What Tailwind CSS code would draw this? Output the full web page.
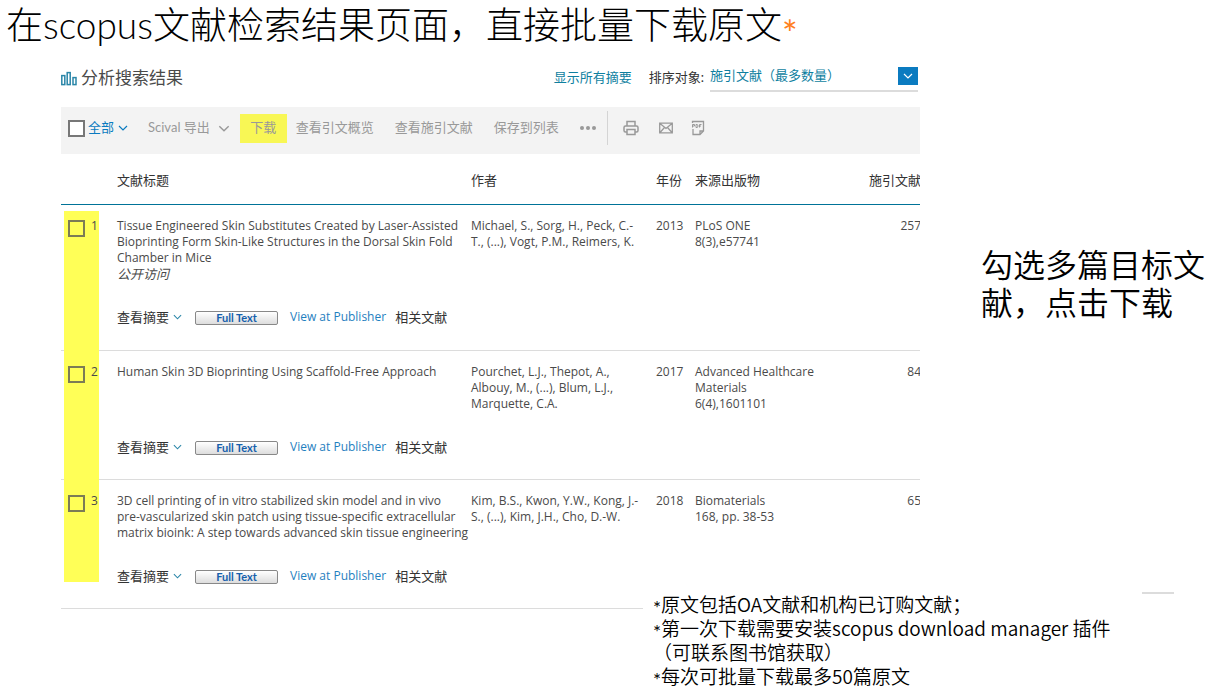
<!DOCTYPE html>
<html lang="zh-CN">
<head>
    <meta charset="UTF-8">
    <meta name="viewport" content="width=device-width, initial-scale=1.0">
    <title>Scopus 批量下载原文</title>
    <script src="https://cdn.jsdelivr.net/npm/@tailwindcss/browser@4"></script>
</head>
<body class="bg-white text-black overflow-x-hidden font-['Lato','Noto_Sans_CJK_SC',sans-serif]">
    <!-- Icon shapes shared by the rows -->
    <svg class="hidden" aria-hidden="true">
        <symbol id="chevron" viewBox="0 0 10 6"><path d="M1 1l4 4 4-4" fill="none" stroke="currentColor" stroke-width="1.2"/></symbol>
    </svg>

    <!-- Slide title -->
    <header class="pl-[6px] h-12">
        <h1 class="text-[37px] leading-[50px] font-light whitespace-nowrap">在scopus文献检索结果页面，直接批量下载原文<span class="align-sub leading-none font-normal text-[#ff7f1e]">*</span></h1>
    </header>

    <div class="flex items-start">
        <!-- Search results -->
        <main class="ml-[61px] w-[71%] shrink-0 overflow-hidden text-[13px] text-[#4a4a4a]">
            <!-- Sort bar -->
            <div class="flex items-center h-[59px] pr-[2px]">
                <a href="#" class="flex items-center gap-1 text-[17px] leading-6">
                    <svg class="w-4 h-4 text-[#2a86a8]" viewBox="0 0 16 16" fill="none" stroke="currentColor" stroke-width="1.5">
                        <rect x="0.8" y="5.6" width="3" height="9"/>
                        <rect x="6.2" y="2.6" width="3" height="12"/>
                        <rect x="12" y="7.6" width="3" height="7"/>
                    </svg>
                    分析搜索结果
                </a>
                <a href="#" class="ml-auto text-[#0f7f9f]">显示所有摘要</a>
                <label for="sort" class="ml-[17px] mr-[6px] text-[#333]">排序对象:</label>
                <div class="relative w-[208px] h-7 border-b-2 border-[#dcdcdc]">
                    <select id="sort" class="appearance-none w-full h-[22px] leading-[22px] text-[#0f7f9f] bg-transparent outline-none">
                        <option>施引文献（最多数量）</option>
                    </select>
                    <span class="absolute right-0 top-[3px] w-5 h-[18px] bg-[#0b7bc0] text-white flex items-center justify-center pointer-events-none">
                        <svg class="w-[10px] h-[6px]"><use href="#chevron"/></svg>
                    </span>
                </div>
            </div>

            <!-- Toolbar -->
            <div class="flex items-center h-[47px] pb-[5px] pl-[7px] bg-[#f3f3f3] text-[#999] whitespace-nowrap">
                <input type="checkbox" id="all" class="appearance-none w-[17px] h-[17px] border-2 border-[#777] bg-white">
                <label for="all" class="ml-[3px] text-[#0b7bc0]">全部</label>
                <svg class="ml-1 w-[10px] h-[6px] text-[#0b7bc0]"><use href="#chevron"/></svg>
                <button class="ml-5 flex items-center gap-2">Scival 导出 <svg class="w-3 h-[7px]"><use href="#chevron"/></svg></button>
                <button class="ml-[10px] w-[47px] h-[29px] bg-[#f8f755]">下载</button>
                <button class="ml-[9px]">查看引文概览</button>
                <button class="ml-[21px]">查看施引文献</button>
                <button class="ml-[21px]">保存到列表</button>
                <button class="ml-[21px]" aria-label="更多">
                    <svg class="w-4 h-1" viewBox="0 0 16 4" fill="currentColor"><circle cx="2" cy="2" r="2"/><circle cx="8" cy="2" r="2"/><circle cx="14" cy="2" r="2"/></svg>
                </button>
                <span class="ml-[11px] h-[34px] border-l border-[#d4d4d4]"></span>
                <button class="ml-[15px]" aria-label="打印">
                    <svg class="w-4 h-4" viewBox="0 0 16 16" fill="none" stroke="currentColor" stroke-width="1.5"><path d="M4 6V1.500h8V6M4 12H2.500Q1 12 1 10.500v-3Q1 6 2.500 6h11Q15 6 15 7.500v3Q15 12 13.500 12H12M4 9.500h8v5H4z"/></svg>
                </button>
                <button class="ml-5" aria-label="电子邮件">
                    <svg class="w-[14px] h-4" viewBox="0 0 14 16" fill="none" stroke="currentColor" stroke-width="1.3"><path d="M.7 3.200h12.600v9.600H.7zM1 3.500l6 5 6-5M1 12.500l4.500-5M13 12.500l-4.500-5"/></svg>
                </button>
                <button class="ml-[18px]" aria-label="PDF">
                    <svg class="w-[14px] h-4" viewBox="0 0 14 16" fill="none" stroke="currentColor" stroke-width="1.3"><path d="M1.500 3V1.500h11V11L9 14.500H2V9M9 14.500V11h3.500"/><path stroke-width="1" d="M1.500 7.500v-3h2v1.500h-2M5 7.500v-3h1q1 0 1 1.500t-1 1.500zM8.500 7.500v-3h2M8.500 6h1.500"/></svg>
                </button>
            </div>

            <!-- Result table -->
            <div class="relative">
                <table class="w-[860px] table-fixed border-collapse text-left leading-4">
                    <thead class="[&_th]:shadow-[inset_0_-1px_0_#007398] [&_th]:font-normal">
                        <tr class="h-[51px] text-[#333]">
                            <th class="w-14"></th>
                            <th class="w-[354px]">文献标题</th>
                            <th class="w-[185px]">作者</th>
                            <th class="w-[39px]">年份</th>
                            <th class="w-[172px]">来源出版物</th>
                            <th class="text-right whitespace-nowrap">施引文献</th>
                        </tr>
                    </thead>
                    <tbody class="[&>tr]:border-b [&>tr]:border-[#dcdcdc] [&_td]:align-top [&_td]:pt-[13px] text-[12px] font-['Open_Sans','Noto_Sans_CJK_SC',sans-serif]">
                        <tr class="h-[145px]">
                            <td>
                                <div class="relative z-10 flex items-start gap-[6px] pl-[7px]">
                                    <input type="checkbox" id="r1" class="appearance-none mt-[2px] w-[17px] h-[17px] border-2 border-[#7c7c55]">
                                    <label for="r1">1</label>
                                </div>
                            </td>
                            <td>
                                <div class="min-h-[91px] whitespace-nowrap">Tissue Engineered Skin Substitutes Created by Laser-Assisted<br>Bioprinting Form Skin-Like Structures in the Dorsal Skin Fold<br>Chamber in Mice<br><em class="text-[13px]">公开访问</em></div>
                                <div class="flex items-center whitespace-nowrap">
                                    <a href="#" class="flex items-center gap-1 text-[13px] text-[#333]">查看摘要 <svg class="w-[9px] h-[6px] text-[#2a86a8]"><use href="#chevron"/></svg></a>
                                    <button class="ml-[13px] mt-[2px] w-[83px] h-[14px] rounded-xs border border-[#888] bg-linear-to-b from-white to-[#ddd] font-['Lato'] text-[11px] leading-3 font-bold text-[#1560ac]">Full Text</button>
                                    <a href="#" class="ml-3 text-[#1f80c0]">View at Publisher</a>
                                    <a href="#" class="ml-[9px] text-[13px] text-[#333]">相关文献</a>
                                </div>
                            </td>
                            <td>Michael, S., Sorg, H., Peck, C.-<br>T., (...), Vogt, P.M., Reimers, K.</td>
                            <td>2013</td>
                            <td>PLoS ONE<br>8(3),e57741</td>
                            <td class="text-right">257</td>
                        </tr>
                        <tr class="h-[129px]">
                            <td>
                                <div class="relative z-10 flex items-start gap-[6px] pl-[7px]">
                                    <input type="checkbox" id="r2" class="appearance-none mt-[2px] w-[17px] h-[17px] border-2 border-[#7c7c55]">
                                    <label for="r2">2</label>
                                </div>
                            </td>
                            <td>
                                <div class="min-h-[75px] whitespace-nowrap">Human Skin 3D Bioprinting Using Scaffold-Free Approach</div>
                                <div class="flex items-center whitespace-nowrap">
                                    <a href="#" class="flex items-center gap-1 text-[13px] text-[#333]">查看摘要 <svg class="w-[9px] h-[6px] text-[#2a86a8]"><use href="#chevron"/></svg></a>
                                    <button class="ml-[13px] mt-[2px] w-[83px] h-[14px] rounded-xs border border-[#888] bg-linear-to-b from-white to-[#ddd] font-['Lato'] text-[11px] leading-3 font-bold text-[#1560ac]">Full Text</button>
                                    <a href="#" class="ml-3 text-[#1f80c0]">View at Publisher</a>
                                    <a href="#" class="ml-[9px] text-[13px] text-[#333]">相关文献</a>
                                </div>
                            </td>
                            <td>Pourchet, L.J., Thepot, A.,<br>Albouy, M., (...), Blum, L.J.,<br>Marquette, C.A.</td>
                            <td>2017</td>
                            <td>Advanced Healthcare<br>Materials<br>6(4),1601101</td>
                            <td class="text-right">84</td>
                        </tr>
                        <tr class="h-[129px]">
                            <td>
                                <div class="relative z-10 flex items-start gap-[6px] pl-[7px]">
                                    <input type="checkbox" id="r3" class="appearance-none mt-[2px] w-[17px] h-[17px] border-2 border-[#7c7c55]">
                                    <label for="r3">3</label>
                                </div>
                            </td>
                            <td>
                                <div class="min-h-[75px] whitespace-nowrap">3D cell printing of in vitro stabilized skin model and in vivo<br>pre-vascularized skin patch using tissue-specific extracellular<br>matrix bioink: A step towards advanced skin tissue engineering</div>
                                <div class="flex items-center whitespace-nowrap">
                                    <a href="#" class="flex items-center gap-1 text-[13px] text-[#333]">查看摘要 <svg class="w-[9px] h-[6px] text-[#2a86a8]"><use href="#chevron"/></svg></a>
                                    <button class="ml-[13px] mt-[2px] w-[83px] h-[14px] rounded-xs border border-[#888] bg-linear-to-b from-white to-[#ddd] font-['Lato'] text-[11px] leading-3 font-bold text-[#1560ac]">Full Text</button>
                                    <a href="#" class="ml-3 text-[#1f80c0]">View at Publisher</a>
                                    <a href="#" class="ml-[9px] text-[13px] text-[#333]">相关文献</a>
                                </div>
                            </td>
                            <td>Kim, B.S., Kwon, Y.W., Kong, J.-<br>S., (...), Kim, J.H., Cho, D.-W.</td>
                            <td>2018</td>
                            <td>Biomaterials<br>168, pp. 38-53</td>
                            <td class="text-right">65</td>
                        </tr>
                    </tbody>
                </table>
                <!-- Highlighter over the checkbox column -->
                <div class="absolute left-[3px] top-[57px] bottom-[27px] w-[35px] bg-[#ffff57]"></div>
            </div>
        </main>

        <!-- Side note -->
        <aside class="ml-[61px] mt-[196px] w-[226px] shrink-0 text-[32px] leading-[38px] font-[350] font-['Noto_Sans_CJK_SC',sans-serif]">勾选多篇目标文献，点击下载</aside>
    </div>

    <!-- Footnotes -->
    <footer class="relative -mt-[17px] ml-[643px] pl-[10px] pr-9 flex justify-between items-start bg-white text-[19px] leading-[23px] font-[350] font-['Noto_Sans_CJK_SC',sans-serif]">
        <ul class="whitespace-nowrap [&>li]:flex [&>li]:h-6 [&>li>span]:self-end [&>li>span]:leading-4 [&>li>span]:font-['Lato'] [&>li>span]:font-normal">
            <li><span>*</span>原文包括OA文献和机构已订购文献；</li>
            <li><span>*</span>第一次下载需要安装scopus download manager 插件</li>
            <li>（可联系图书馆获取）</li>
            <li><span>*</span>每次可批量下载最多50篇原文</li>
        </ul>
        <span class="w-8 border-t-2 border-[#dcdcdc]"></span>
    </footer>
</body>
</html>
